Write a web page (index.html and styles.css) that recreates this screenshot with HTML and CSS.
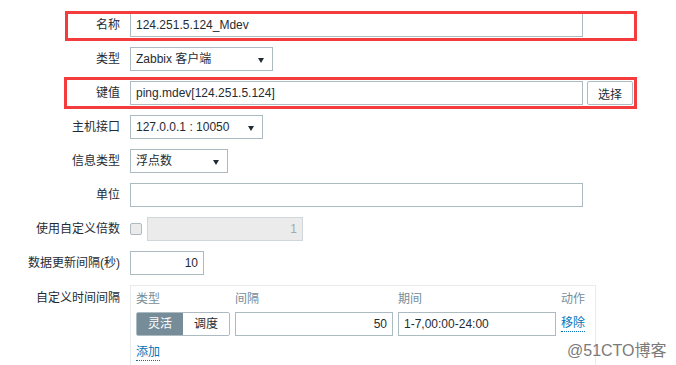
FILE: index.html
```html
<!DOCTYPE html>
<html lang="zh-CN">
  <head>
    <meta charset="UTF-8" />
    <meta name="viewport" content="width=device-width, initial-scale=1.0" />
    <title>监控项</title>
    <link rel="stylesheet" href="styles.css">
  </head>
  <body>
    <form class="item-form">
      <div class="form-row">
        <span class="mark mark-name"></span>
        <label class="form-label">名称</label>
        <div class="field">
          <div class="text-box wide">124.251.5.124_Mdev</div>
        </div>
      </div>

      <div class="form-row">
        <label class="form-label">类型</label>
        <div class="field">
          <div class="select-box w-type">Zabbix 客户端<i class="caret"></i></div>
        </div>
      </div>

      <div class="form-row">
        <span class="mark mark-key"></span>
        <label class="form-label">键值</label>
        <div class="field">
          <div class="text-box wide">ping.mdev[124.251.5.124]</div>
          <button type="button" class="btn-grey">选择</button>
        </div>
      </div>

      <div class="form-row">
        <label class="form-label">主机接口</label>
        <div class="field">
          <div class="select-box w-iface">127.0.0.1 : 10050<i class="caret"></i></div>
        </div>
      </div>

      <div class="form-row">
        <label class="form-label">信息类型</label>
        <div class="field">
          <div class="select-box w-info">浮点数<i class="caret"></i></div>
        </div>
      </div>

      <div class="form-row">
        <label class="form-label">单位</label>
        <div class="field">
          <div class="text-box wide"></div>
        </div>
      </div>

      <div class="form-row">
        <label class="form-label">使用自定义倍数</label>
        <div class="field">
          <span class="check-box"></span>
          <div class="text-box disabled num w-mult">1</div>
        </div>
      </div>

      <div class="form-row">
        <label class="form-label">数据更新间隔(秒)</label>
        <div class="field">
          <div class="text-box num w-delay">10</div>
        </div>
      </div>

      <div class="form-row top">
        <label class="form-label">自定义时间间隔</label>
        <div class="field">
          <div class="interval-table">
            <div class="interval-grid">
              <span class="col-head">类型</span>
              <span class="col-head">间隔</span>
              <span class="col-head">期间</span>
              <span class="col-head">动作</span>

              <div class="radio-seg">
                <span class="seg on">灵活</span>
                <span class="seg">调度</span>
              </div>
              <div class="text-box num">50</div>
              <div class="text-box">1-7,00:00-24:00</div>
              <a href="#" class="link-action">移除</a>
            </div>
            <a href="#" class="link-action add">添加</a>
          </div>
        </div>
      </div>
    </form>

    <div class="watermark">@51CTO博客</div>
  </body>
</html>
```

FILE: styles.css
```css
:root {
  --text: #1f2c33;
  --border: #acbbc2;
  --muted: #768d99;
  --link: #0275b8;
  --mark: #f43c3c;
}

html,
body {
  margin: 0;
  padding: 0;
  background: #ffffff;
  color: var(--text);
  font-family: "Liberation Sans", "Noto Sans CJK SC", sans-serif;
  font-size: 12px;
  width: 100%;
  height: 100%;
  overflow: hidden;
}

.item-form {
  display: flex;
  flex-direction: column;
  gap: 10px;
  padding-top: 13px;
}

.form-row {
  position: relative;
  display: flex;
  align-items: center;
  gap: 10px;
  min-height: 24px;
}

.form-row.top {
  align-items: flex-start;
}

.form-row.top .form-label {
  padding-top: 5px;
}

.form-label {
  width: 120px;
  text-align: right;
  line-height: 16px;
  flex-shrink: 0;
}

.field {
  display: flex;
  align-items: center;
  gap: 4px;
}

.text-box,
.select-box {
  box-sizing: border-box;
  height: 24px;
  line-height: 22px;
  border: 1px solid var(--border);
  background: #ffffff;
  padding: 0 5px;
  white-space: nowrap;
  overflow: hidden;
}

.text-box.wide {
  width: 453px;
}

.text-box.num {
  text-align: right;
}

.text-box.disabled {
  background: #ebebeb;
  color: #a4a9ac;
  border-color: #d0d7da;
}

.w-mult {
  width: 156px;
}

.w-delay {
  width: 74px;
}

.select-box {
  position: relative;
  padding-right: 20px;
}

.w-type {
  width: 143px;
}

.w-iface {
  width: 133px;
}

.w-info {
  width: 98px;
}

.caret {
  position: absolute;
  right: 8px;
  top: 10px;
  width: 0;
  height: 0;
  border-left: 3px solid transparent;
  border-right: 3px solid transparent;
  border-top: 5px solid var(--text);
}

.btn-grey {
  box-sizing: border-box;
  width: 46px;
  height: 24px;
  border: 1px solid var(--border);
  border-radius: 2px;
  background: #ffffff;
  color: var(--text);
  font: inherit;
  padding: 0;
  cursor: pointer;
}

.check-box {
  box-sizing: border-box;
  width: 12px;
  height: 12px;
  border: 1px solid var(--border);
  border-radius: 2px;
  background: #ebebeb;
  margin-right: 1px;
}

/* red annotation frames drawn over the form */
.mark {
  position: absolute;
  border: 3px solid var(--mark);
  box-sizing: border-box;
  pointer-events: none;
}

.mark-name {
  left: 65px;
  top: -2px;
  width: 572px;
  height: 30px;
}

.mark-key {
  left: 64px;
  top: -4px;
  width: 573px;
  height: 32px;
}

.interval-table {
  box-sizing: border-box;
  width: 466px;
  height: 90px;
  border: 1px solid #e8ecee;
  padding: 5px 5px 0;
}

.interval-grid {
  display: grid;
  grid-template-columns: 94px 158px 158px auto;
  grid-auto-rows: auto;
  column-gap: 5px;
  row-gap: 5px;
  align-items: center;
}

.col-head {
  color: var(--muted);
  line-height: 16px;
}

.radio-seg {
  display: flex;
  height: 24px;
  box-sizing: border-box;
  border: 1px solid var(--border);
  border-radius: 2px;
  overflow: hidden;
}

.seg {
  flex: 1;
  text-align: center;
  line-height: 22px;
  background: #ffffff;
}

.seg.on {
  background: var(--muted);
  color: #ffffff;
}

.link-action {
  color: var(--link);
  text-decoration: none;
  border-bottom: 1px dotted var(--link);
  justify-self: start;
  line-height: 15px;
}

.link-action.add {
  display: inline-block;
  margin-top: 9px;
}

.watermark {
  position: absolute;
  left: 567px;
  top: 337px;
  font-size: 16px;
  color: #7a7a7a;
  font-family: "Liberation Sans", "Noto Sans CJK SC", sans-serif;
}
```
